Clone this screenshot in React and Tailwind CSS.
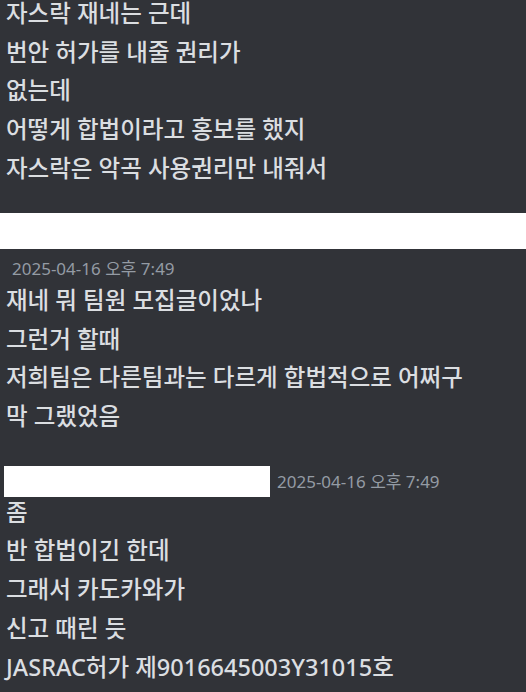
import React from "react";

const topLines = [
  "자스락 재네는 근데",
  "번안 허가를 내줄 권리가",
  "없는데",
  "어떻게 합법이라고 홍보를 했지",
  "자스락은 악곡 사용권리만 내줘서",
];

const firstGroup = [
  "재네 뭐 팀원 모집글이었나",
  "그런거 할때",
  "저희팀은 다른팀과는 다르게 합법적으로 어쩌구",
  "막 그랬었음",
];

const secondGroup = [
  "좀",
  "반 합법이긴 한데",
  "그래서 카도카와가",
  "신고 때린 듯",
  "JASRAC허가 제9016645003Y31015호",
];

function Line({ text }) {
  return <div className="h-[38.7px] leading-[38.7px] whitespace-nowrap">{text}</div>;
}

function Stamp() {
  return <span className="text-[17px] font-normal text-[#949ba4]">2025-04-16 오후 7:49</span>;
}

export default function App() {
  return (
    <div
      className="w-[526px] h-[692px] overflow-hidden bg-white text-[23.5px] font-medium text-[#dbdee1]"
      style={{ fontFamily: '"Noto Sans", "Noto Sans CJK KR", sans-serif' }}
    >
      <div className="h-[213px] overflow-hidden bg-[#313338] px-[6px]">
        <div className="-mt-[6px]">
          {topLines.map((t) => (
            <Line key={t} text={t} />
          ))}
        </div>
      </div>

      <div className="h-[36px]" />

      <div className="h-[443px] overflow-hidden bg-[#313338] px-[6px]">
        <div className="h-[32px] leading-[26px] pl-[6px] pt-[4px]">
          <Stamp />
        </div>
        {firstGroup.map((t) => (
          <Line key={t} text={t} />
        ))}

        <div className="mt-[30px] flex items-center gap-[7px] -ml-[2px]">
          <div className="w-[266px] h-[31px] bg-white" />
          <Stamp />
        </div>
        <div className="-mt-[4px]">
          {secondGroup.map((t) => (
            <Line key={t} text={t} />
          ))}
        </div>
      </div>
    </div>
  );
}
